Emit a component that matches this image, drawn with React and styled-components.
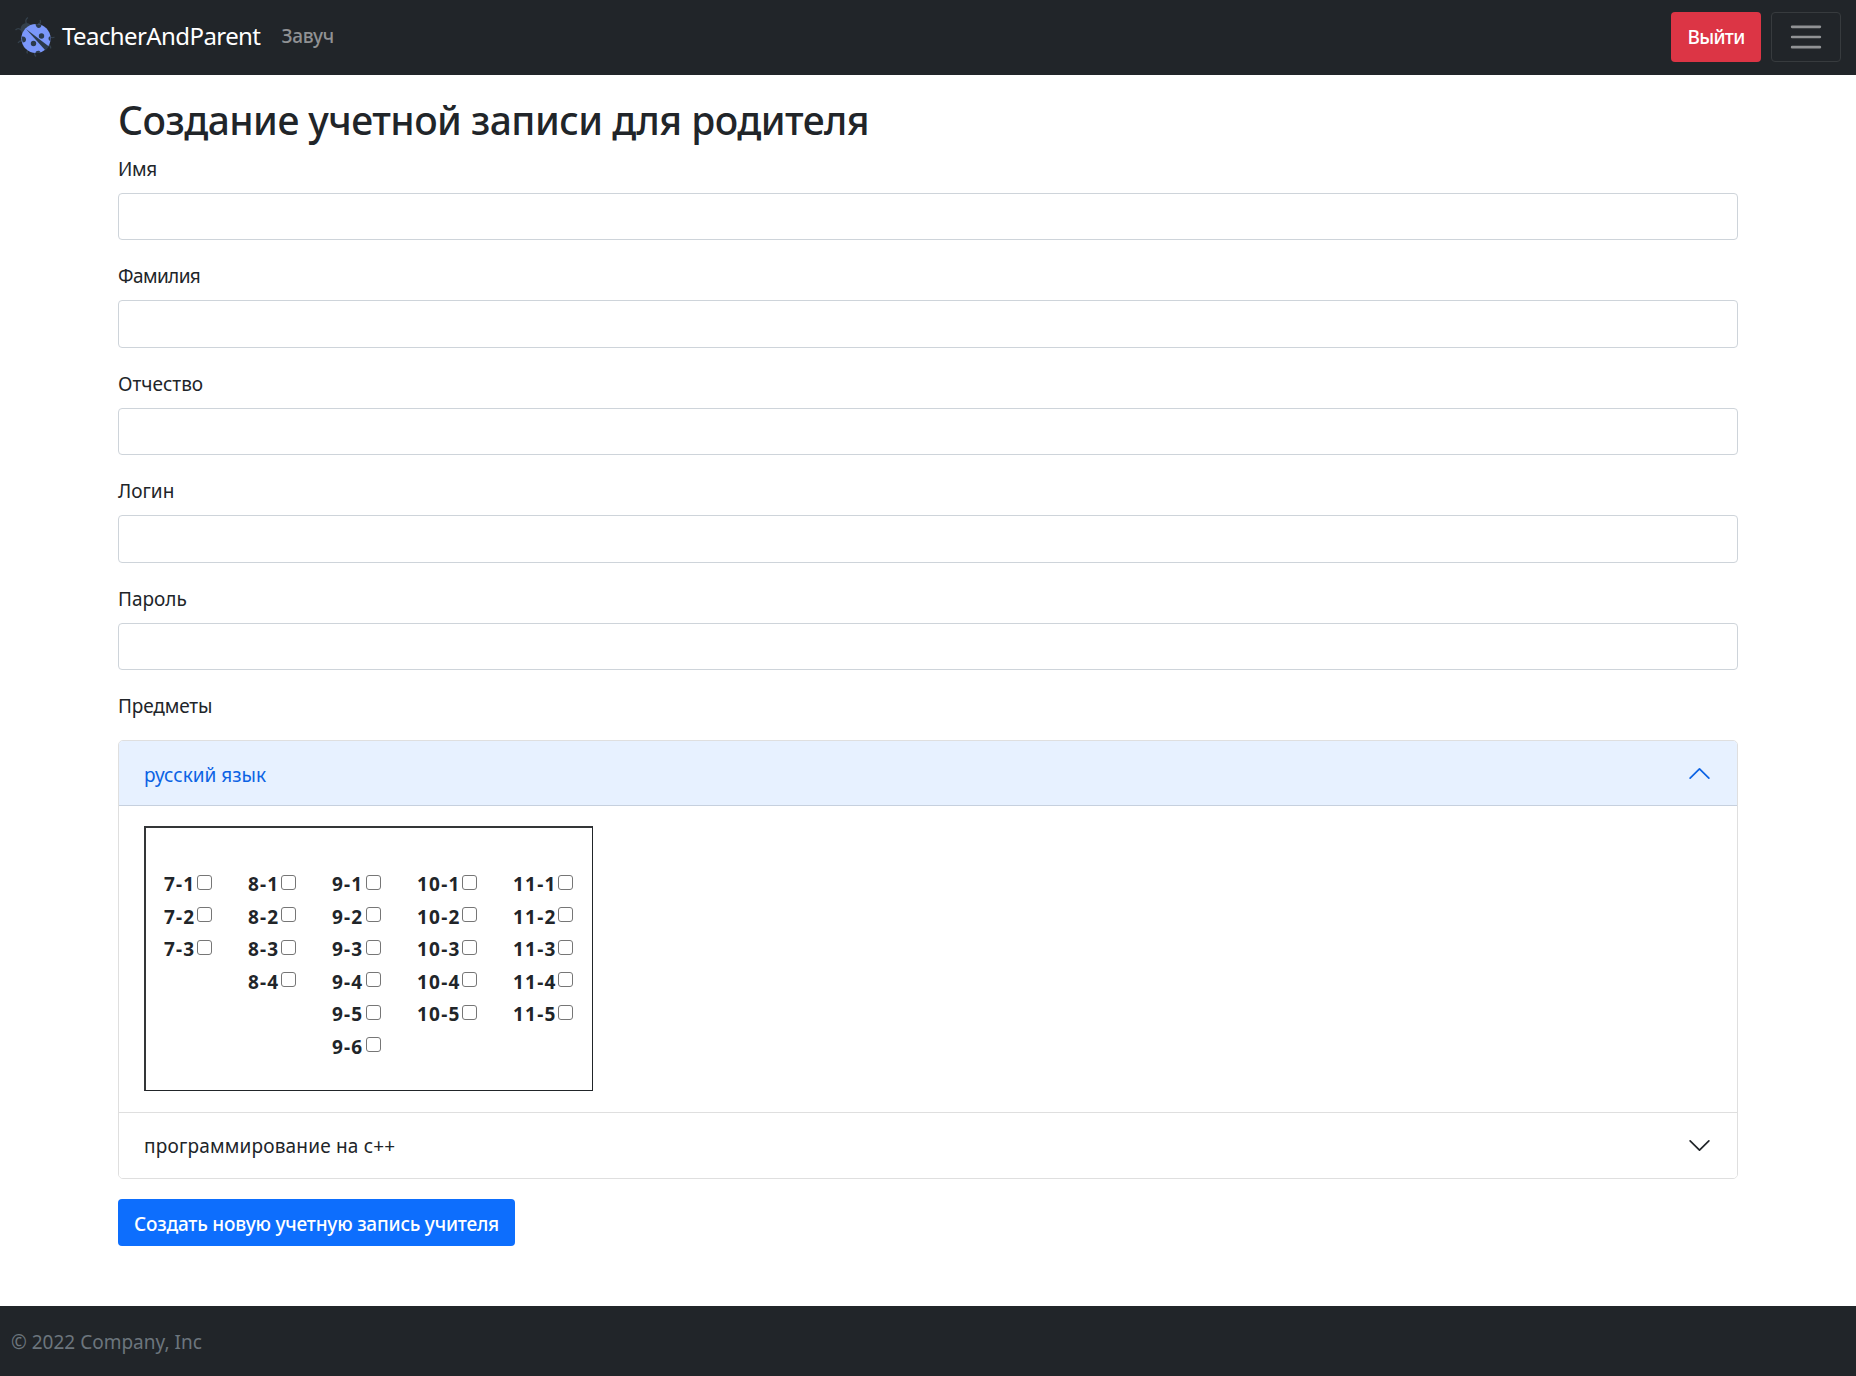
import React, { useState } from "react";
import styled, { createGlobalStyle } from "styled-components";

const Global = createGlobalStyle`
  *, *::before, *::after { box-sizing: border-box; }
  body {
    margin: 0;
    background: #fff;
    color: #212529;
    font-family: "Noto Sans", "Open Sans", sans-serif;
    font-size: 19px;
    line-height: 30px;
  }
`;

const Page = styled.div`
  display: flex;
  flex-direction: column;
  height: 1376px;
  overflow: hidden;
`;

const Navbar = styled.nav`
  display: flex;
  align-items: center;
  height: 75px;
  padding: 0 15px 1px;
  background: #212529;
`;

const Brand = styled.a`
  display: flex;
  align-items: center;
  color: #fff;
  font-size: 24px;
  letter-spacing: -0.59px;
  white-space: nowrap;
`;

const BrandName = styled.span`
  margin-left: 7px;
  padding-bottom: 2px;
`;

const Role = styled.span`
  flex: 1;
  margin-left: 21px;
  padding-bottom: 2px;
  color: #909294;
  font-weight: 500;
  letter-spacing: -0.3px;
`;

const Button = styled.button`
  height: ${(p) => p.$height || 47}px;
  width: ${(p) => p.$width}px;
  padding: ${(p) => p.$drop || 0}px 0 0;
  border: 0;
  border-radius: 4px;
  background: ${(p) => p.$color};
  color: #fff;
  font: 500 19px/30px "Noto Sans", "Open Sans", sans-serif;
  letter-spacing: ${(p) => p.$track || 0}px;
  white-space: nowrap;
`;

const Toggler = styled.button`
  display: flex;
  align-items: center;
  justify-content: center;
  width: 70px;
  height: 50px;
  margin-left: 10px;
  padding: 0;
  border: 1px solid #373b3e;
  border-radius: 4px;
  background: transparent;
`;

const Container = styled.main`
  flex: 1;
  width: 1620px;
  margin: 0 auto;
  padding-top: 19.8px;
`;

const Title = styled.h1`
  margin: 0 0 9px;
  padding-top: 1px;
  font-size: 39px;
  font-weight: 500;
  line-height: 48px;
  letter-spacing: -0.55px;
  white-space: nowrap;
`;

const Field = styled.div`
  margin-bottom: 20px;
`;

const Label = styled.label`
  display: block;
  width: max-content;
  margin-bottom: 9px;
  padding-top: 1px;
  letter-spacing: ${(p) => p.$track || 0}px;
`;

const Input = styled.input`
  display: block;
  width: 100%;
  height: 47.5px;
  border: 1px solid #ced4da;
  border-radius: 4px;
  outline: 0;
`;

const Accordion = styled.div`
  margin-top: 18.7px;
  border: 1px solid #dfdfdf;
  border-radius: 5px;
  overflow: hidden;
`;

const AccordionHead = styled.button`
  display: flex;
  align-items: center;
  justify-content: space-between;
  width: 100%;
  height: 65px;
  padding: ${(p) => (p.$open ? 2 : 0)}px 25px 0;
  border: 0;
  border-bottom: ${(p) => (p.$open ? "1px solid #c6d0de" : "0")};
  background: ${(p) => (p.$open ? "#e7f1ff" : "#fff")};
  color: ${(p) => (p.$open ? "#0c63e4" : "#212529")};
  font: 400 19px/30px "Noto Sans", "Open Sans", sans-serif;
  letter-spacing: ${(p) => p.$track || 0}px;
`;

const Subject = styled.span`
  padding-top: 2px;
`;

const AccordionBody = styled.div`
  height: 307px;
  padding: 20px 25px;
  border-bottom: 1px solid #dfdfdf;
`;

const ClassTable = styled.div`
  display: flex;
  gap: 36px;
  width: 449px;
  height: 265px;
  padding: 40px 0 0 18px;
  border: 1px solid #212529;
  border-top: 2px solid #343638;
  border-left: 2px solid #343638;
`;

const ClassColumn = styled.div`
  display: flex;
  flex-direction: column;
  width: ${(p) => p.$width}px;
`;

const ClassOption = styled.label`
  display: flex;
  align-items: center;
  justify-content: space-between;
  height: 32.5px;
  font-weight: 700;
  letter-spacing: 1.2px;
  white-space: nowrap;
`;

const Checkbox = styled.input`
  appearance: none;
  flex: none;
  width: 15px;
  height: 15px;
  margin: 0 0 4px;
  border: 1px solid #767676;
  border-radius: 3px;
  background: ${(p) => (p.checked ? "#0d6efd" : "#fff")};
`;

const Actions = styled.div`
  margin-top: 20px;
`;

const Footer = styled.footer`
  display: flex;
  align-items: center;
  height: 70px;
  padding: 2px 11px 0;
  background: #212529;
  color: #6c757d;
`;

const Ladybug = () => (
  <svg width="40" height="42" viewBox="15 17 40 42" fill="none">
    <g stroke="#34404b" strokeWidth="1.3">
      <path d="M27 25c-2-2-1.500-5 1-6.500M21 31c-2-2-4-1.500-5.500 0M38 25c3-.5 3-2 2-4M50 38c2 1 3 1 4.500 0M22 42c-2-.5-3 .5-4 2M28 51c-1 1-1.500 2-.5 3.500M35 53c-1 2-.5 3 1 4.500M49 46c1.500 1 2 2 1.500 3.500" />
    </g>
    <circle cx="26.500" cy="30" r="6" fill="#34404b" />
    <circle cx="36" cy="39.500" r="14.600" fill="#7b97fa" />
    <g fill="#2c3a4c">
      <path d="M26 30L49 47.500L45.500 51.500Z" />
      <circle cx="41.500" cy="37" r="2.700" />
      <circle cx="33.500" cy="44.500" r="2.700" />
      <path d="M35.500 25a14.600 14.600 0 0 1 6 1c-.4 4-5.500 4-6-1M22 37.500c5-1 5.500 6 .7 6a14.600 14.600 0 0 1-.7-6M48.500 39.500c0-1.500 1-2.200 2-2.200v4.500c-1 0-2-.7-2-2.300M35.500 54c0-3 5-3 5-.6a14.600 14.600 0 0 1-5 .6" />
    </g>
  </svg>
);

const MenuIcon = () => (
  <svg width="38" height="38" viewBox="0 0 30 30">
    <path stroke="#909294" strokeLinecap="round" strokeWidth="2" d="M4 7h22M4 15h22M4 23h22" />
  </svg>
);

const Chevron = ({ open }) => (
  <svg width="25" height="25" viewBox="0 0 16 16" fill="none">
    <path
      d={open ? "M2 11L8 5L14 11" : "M2 5L8 11L14 5"}
      stroke={open ? "#0c63e4" : "#212529"}
      strokeWidth="1.1"
      strokeLinecap="round"
      strokeLinejoin="round"
    />
  </svg>
);

const fields = [
  { name: "Имя", track: -0.3 },
  { name: "Фамилия", track: -0.6 },
  { name: "Отчество" },
  { name: "Логин" },
  { name: "Пароль", type: "password" },
];

const grades = [
  { grade: 7, count: 3, width: 48 },
  { grade: 8, count: 4, width: 48 },
  { grade: 9, count: 6, width: 49 },
  { grade: 10, count: 5, width: 60 },
  { grade: 11, count: 5, width: 60 },
];

export default function App() {
  const [picked, setPicked] = useState({});
  const toggle = (id) => setPicked((p) => ({ ...p, [id]: !p[id] }));
  return (
    <Page>
      <Global />
      <Navbar>
        <Brand>
          <Ladybug />
          <BrandName>TeacherAndParent</BrandName>
        </Brand>
        <Role>Завуч</Role>
        <Button $color="#dc3545" $width={90} $height={50} $track={-0.7}>Выйти</Button>
        <Toggler aria-label="Меню"><MenuIcon /></Toggler>
      </Navbar>
      <Container>
        <Title>Создание учетной записи для родителя</Title>
        {fields.map((f) => (
          <Field key={f.name}>
            <Label htmlFor={f.name} $track={f.track}>{f.name}</Label>
            <Input id={f.name} type={f.type || "text"} />
          </Field>
        ))}
        <Label $track={-0.15}>Предметы</Label>
        <Accordion>
          <AccordionHead $open>
            <Subject>русский язык</Subject>
            <Chevron open />
          </AccordionHead>
          <AccordionBody>
            <ClassTable>
              {grades.map((g) => (
                <ClassColumn key={g.grade} $width={g.width}>
                  {Array.from({ length: g.count }, (_, i) => {
                    const id = `${g.grade}-${i + 1}`;
                    return (
                      <ClassOption key={id}>
                        <span>{id}</span>
                        <Checkbox type="checkbox" checked={!!picked[id]} onChange={() => toggle(id)} />
                      </ClassOption>
                    );
                  })}
                </ClassColumn>
              ))}
            </ClassTable>
          </AccordionBody>
          <AccordionHead $track={0.19}>
            <Subject>программирование на с++</Subject>
            <Chevron />
          </AccordionHead>
        </Accordion>
        <Actions>
          <Button $color="#0d6efd" $width={397} $track={-0.21} $drop={3}>Создать новую учетную запись учителя</Button>
        </Actions>
      </Container>
      <Footer>© 2022 Company, Inc</Footer>
    </Page>
  );
}
